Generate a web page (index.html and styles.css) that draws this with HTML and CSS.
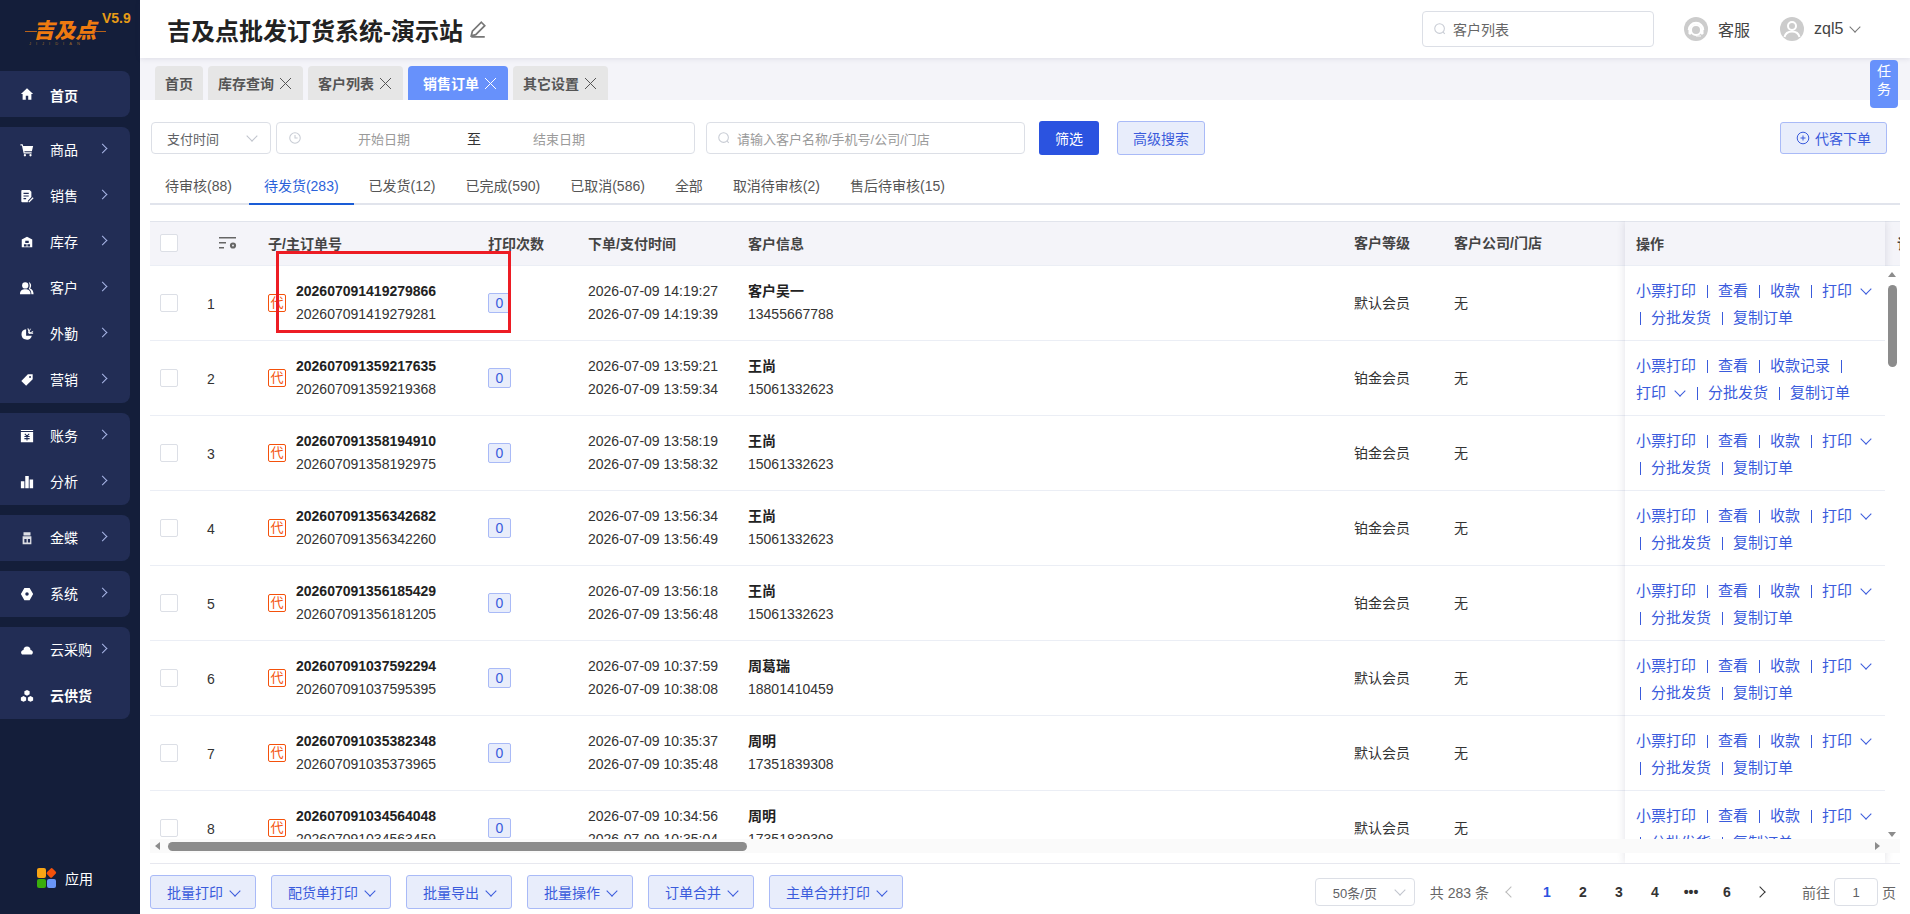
FILE: index.html
```html
<!DOCTYPE html>
<html lang="zh-CN">
<head>
    <meta charset="UTF-8">
    <title>吉及点批发订货系统</title>
    <link rel="stylesheet" href="styles.css">
</head>
<body>
    <aside class="sidebar">
        <div class="logo">
            <span class="logo-text">吉及点</span>
            <span class="logo-sub">JIJIDIAN</span>
            <span class="logo-version">V5.9</span>
        </div>
        <nav class="nav">
            <div class="nav-group">
                <a class="nav-item bold home"><svg class="nav-icon" viewBox="0 0 16 16"><path d="M8 1.500 1 8h2v6.500h3.600V10h2.800v4.500H13V8h2z"/></svg><span>首页</span></a>
            </div>
            <div class="nav-group">
                <a class="nav-item"><svg class="nav-icon" viewBox="0 0 16 16"><path d="M.5 1.500h2.600l.5 2H15l-1.400 6H5l.3 1.200h8v1.200H4.200L2.200 2.800H.5z"/><circle cx="5.600" cy="14" r="1.300"/><circle cx="12" cy="14" r="1.300"/></svg><span>商品</span><i class="chev"></i></a>
                <a class="nav-item"><svg class="nav-icon" viewBox="0 0 16 16"><path d="M2.500 1H11l2 2v6l-4 4.500V15H2.500a1 1 0 0 1-1-1V2a1 1 0 0 1 1-1z"/><path d="M4 5h6M4 8h6M4 11h3" stroke="#222d55" stroke-width="1.300"/><path d="m10 15 5-5" stroke="#fff" stroke-width="1.500"/></svg><span>销售</span><i class="chev"></i></a>
                <a class="nav-item"><svg class="nav-icon" viewBox="0 0 16 16"><path d="M8 2 14 5v9H2V5z"/><path d="M6 6.500h4V9H6zM4.500 10.500h3V13h-3zM8.500 10.500h3V13h-3z" fill="#222d55"/></svg><span>库存</span><i class="chev"></i></a>
                <a class="nav-item"><svg class="nav-icon" viewBox="0 0 16 16"><circle cx="6" cy="5" r="3.600"/><path d="M0 15c0-4 2.500-5.500 6-5.500s6 1.500 6 5.500z"/><path d="M10 1.500c3 .5 3.500 5 1.500 7 2.500 1 4 3 4 6.500h-2.500c0-3-1-5-3-6 1.500-2 1.500-5 0-7.500z"/></svg><span>客户</span><i class="chev"></i></a>
                <a class="nav-item"><svg class="nav-icon" viewBox="0 0 16 16"><path d="M7 2.500a6 6 0 1 0 6.500 7.500H7z"/><path d="M9 1.500 11 7H15" fill="none" stroke="#fff" stroke-width="1.200"/><path d="M12 2 9.500 7M15 5l-5 2.500" fill="none" stroke="#fff" stroke-width="1"/></svg><span>外勤</span><i class="chev"></i></a>
                <a class="nav-item"><svg class="nav-icon" viewBox="0 0 16 16"><path d="M9 1.500h5.500V7L7 14.500 1.500 9z"/><circle cx="11.500" cy="4.500" r="1.100" fill="#222d55"/></svg><span>营销</span><i class="chev"></i></a>
            </div>
            <div class="nav-group">
                <a class="nav-item"><svg class="nav-icon" viewBox="0 0 16 16"><path d="M1 1h14v1.200H1zM1 3.500h14V15H1z"/><path d="m5.500 5.500 2.500 2.500 2.500-2.500M5 8.500h6M5 11h6M8 8v5" fill="none" stroke="#222d55" stroke-width="1.200"/></svg><span>账务</span><i class="chev"></i></a>
                <a class="nav-item"><svg class="nav-icon" viewBox="0 0 16 16"><path d="M1 7h4v8H1zM6 1h4v14H6zM11 5h4v10h-4z"/></svg><span>分析</span><i class="chev"></i></a>
            </div>
            <div class="nav-group">
                <a class="nav-item"><svg class="nav-icon" viewBox="0 0 16 16"><path d="M4 1.500h8v3.500H4zM3 6h10v9H3z" opacity=".85"/><path d="M5 9h2.500v4H5zM9 9h2.500v4H9z" fill="#222d55"/></svg><span>金蝶</span><i class="chev"></i></a>
            </div>
            <div class="nav-group">
                <a class="nav-item"><svg class="nav-icon" viewBox="0 0 16 16"><path fill-rule="evenodd" d="M5 1h6l4 7-4 7H5L1 8zM8 6a2 2 0 1 0 0 4 2 2 0 0 0 0-4z"/></svg><span>系统</span><i class="chev"></i></a>
            </div>
            <div class="nav-group">
                <a class="nav-item"><svg class="nav-icon" viewBox="0 0 16 16"><path d="M4 8a4 4 0 0 1 8 0c3 .2 3.500 4 1.500 5h-11C.5 12 1 8.200 4 8z"/></svg><span class="wide">云采购</span><i class="chev"></i></a>
                <a class="nav-item bold"><svg class="nav-icon" viewBox="0 0 16 16"><path d="m8 1 3 1.700v3.300L8 7.700 5 6V2.700zM4 8l3 1.700V13l-3 1.700L1 13V9.700zM12 8l3 1.700V13l-3 1.700L9 13V9.700z"/></svg><span class="wide">云供货</span></a>
            </div>
        </nav>
        <div class="app-link">
            <span class="app-dots"><i class="dot-a"></i><i class="dot-b"></i><i class="dot-c"></i><i class="dot-d"></i></span>
            <span>应用</span>
        </div>
    </aside>

    <div class="main">
        <header class="topbar">
            <h1 class="title">吉及点批发订货系统-演示站</h1>
            <svg class="edit-icon" viewBox="0 0 16 16"><path d="M11 2l3 3-8 8-4 1 1-4zM2 15h12" fill="none" stroke="#777" stroke-width="1.500"/></svg>
            <div class="top-search">
                <svg class="search-icon" viewBox="0 0 16 16"><circle cx="7.500" cy="7.500" r="5.500"/><path d="m11.500 11.500 2 2"/></svg>
                <span>客户列表</span>
            </div>
            <div class="top-user top-service">
                <span class="avatar"><svg viewBox="0 0 24 24"><path d="M5 13a7 7 0 0 1 14 0" fill="none" stroke="#fff" stroke-width="2.500"/><circle cx="12" cy="13" r="5" fill="none" stroke="#fff" stroke-width="2"/><path d="M5 12h2v5H5zM17 12h2v5h-2zM12 19h5" stroke="#fff" fill="#fff"/></svg></span>
                <span>客服</span>
            </div>
            <div class="top-user top-account">
                <span class="avatar"><svg viewBox="0 0 24 24"><circle cx="12" cy="9" r="4" fill="none" stroke="#fff" stroke-width="2"/><path d="M4.500 20c1-4 4-5.500 7.500-5.500s6.500 1.500 7.500 5.500" fill="none" stroke="#fff" stroke-width="2"/></svg></span>
                <span>zql5</span>
                <i class="caret"></i>
            </div>
        </header>

        <div class="tabbar">
            <span class="tab">首页</span>
            <span class="tab">库存查询<b class="close"></b></span>
            <span class="tab">客户列表<b class="close"></b></span>
            <span class="tab active">销售订单<b class="close"></b></span>
            <span class="tab">其它设置<b class="close"></b></span>
            <span class="task-btn">任务</span>
        </div>

        <section class="content">
            <div class="filters">
                <div class="field pay-type"><span>支付时间</span><i class="caret light"></i></div>
                <div class="field date-range">
                    <svg class="search-icon" viewBox="0 0 16 16"><circle cx="8" cy="8" r="6"/><path d="M8 4.500V8h3"/></svg>
                    <span class="ph date-start">开始日期</span>
                    <span class="date-to">至</span>
                    <span class="ph date-end">结束日期</span>
                </div>
                <div class="field order-search">
                    <svg class="search-icon" viewBox="0 0 16 16"><circle cx="7.500" cy="7.500" r="5.500"/><path d="m11.500 11.500 2 2"/></svg>
                    <span class="ph">请输入客户名称/手机号/公司/门店</span>
                </div>
                <button class="btn-primary">筛选</button>
                <button class="btn-light btn-search">高级搜索</button>
                <button class="btn-light btn-order"><svg class="plus-icon" viewBox="0 0 14 14"><circle cx="7" cy="7" r="5.800"/><path d="M7 4.500v5M4.500 7h5"/></svg>代客下单</button>
            </div>

            <div class="status-tabs">
                <span class="status">待审核(88)</span>
                <span class="status active">待发货(283)</span>
                <span class="status">已发货(12)</span>
                <span class="status">已完成(590)</span>
                <span class="status">已取消(586)</span>
                <span class="status">全部</span>
                <span class="status">取消待审核(2)</span>
                <span class="status">售后待审核(15)</span>
            </div>

            <div class="table" id="table">
                <div class="row head">
                    <div class="c-check"><i class="box"></i></div>
                    <div class="c-num"><svg class="col-icon" viewBox="0 0 18 14"><path d="M0 1h17v1.500H0zM0 6h7v1.500H0zM0 11h5v1.500H0z"/><circle cx="14" cy="9.500" r="2" fill="none" stroke="#666" stroke-width="2.200"/></svg></div>
                    <div class="c-order">子/主订单号</div>
                    <div class="c-print">打印次数</div>
                    <div class="c-time">下单/支付时间</div>
                    <div class="c-cust">客户信息</div>
                    <div class="c-level">客户等级</div>
                    <div class="c-shop">客户公司/门店</div>
                    <div class="c-next">订</div>
                </div>
                <div id="rows"></div>

                <div class="fixed-col" id="ops">
                    <div class="op-head">操作</div>
                </div>

                <div class="mark"></div>
                <div class="vbar"><i class="arrow-up"></i><i class="vthumb"></i><i class="arrow-down"></i></div>
                <div class="hbar"><i class="arrow-left"></i><i class="hthumb"></i><i class="arrow-right"></i></div>
            </div>

            <div class="footer">
                <button class="btn-light btn-batch">批量打印<i class="caret blue"></i></button>
                <button class="btn-light btn-batch">配货单打印<i class="caret blue"></i></button>
                <button class="btn-light btn-batch">批量导出<i class="caret blue"></i></button>
                <button class="btn-light btn-batch">批量操作<i class="caret blue"></i></button>
                <button class="btn-light btn-batch">订单合并<i class="caret blue"></i></button>
                <button class="btn-light btn-batch">主单合并打印<i class="caret blue"></i></button>
                <div class="pager">
                    <div class="field page-size"><span>50条/页</span><i class="caret light"></i></div>
                    <span class="total">共 283 条</span>
                    <i class="prev"></i>
                    <span class="pn current">1</span>
                    <span class="pn">2</span>
                    <span class="pn">3</span>
                    <span class="pn">4</span>
                    <span class="pn">•••</span>
                    <span class="pn">6</span>
                    <i class="next"></i>
                    <span class="goto">前往</span>
                    <span class="field page-input">1</span>
                    <span>页</span>
                </div>
            </div>
        </section>
    </div>

    <script>
        var orders = [
            ['202607091419279866', '202607091419279281', '14:19:27', '14:19:39', '客户吴一', '13455667788', '默认会员'],
            ['202607091359217635', '202607091359219368', '13:59:21', '13:59:34', '王尚', '15061332623', '铂金会员'],
            ['202607091358194910', '202607091358192975', '13:58:19', '13:58:32', '王尚', '15061332623', '铂金会员'],
            ['202607091356342682', '202607091356342260', '13:56:34', '13:56:49', '王尚', '15061332623', '铂金会员'],
            ['202607091356185429', '202607091356181205', '13:56:18', '13:56:48', '王尚', '15061332623', '铂金会员'],
            ['202607091037592294', '202607091037595395', '10:37:59', '10:38:08', '周葛瑞', '18801410459', '默认会员'],
            ['202607091035382348', '202607091035373965', '10:35:37', '10:35:48', '周明', '17351839308', '默认会员'],
            ['202607091034564048', '202607091034563459', '10:34:56', '10:35:04', '周明', '17351839308', '默认会员']
        ];

        var rowsHtml = '';
        var opsHtml = '';
        orders.forEach(function(o, i) {
            rowsHtml += '<div class="row">' +
                '<div class="c-check"><i class="box"></i></div>' +
                '<div class="c-num">' + (i + 1) + '</div>' +
                '<div class="c-order"><span class="dai">代</span><div class="two"><b>' + o[0] + '</b><span>' + o[1] + '</span></div></div>' +
                '<div class="c-print"><span class="count">0</span></div>' +
                '<div class="c-time two"><span>2026-07-09 ' + o[2] + '</span><span>2026-07-09 ' + o[3] + '</span></div>' +
                '<div class="c-cust two"><b>' + o[4] + '</b><span>' + o[5] + '</span></div>' +
                '<div class="c-level">' + o[6] + '</div>' +
                '<div class="c-shop">无</div>' +
                '</div>';

            // the second order has a longer first line, so its links wrap differently
            var lines = i === 1
                ? '<p>小票打印<s></s>查看<s></s>收款记录<s></s></p><p>打印<i class="caret blue"></i><s></s>分批发货<s></s>复制订单</p>'
                : '<p>小票打印<s></s>查看<s></s>收款<s></s>打印<i class="caret blue"></i></p><p><s class="first"></s>分批发货<s></s>复制订单</p>';
            opsHtml += '<div class="op-cell">' + lines + '</div>';
        });
        document.getElementById('rows').innerHTML = rowsHtml;
        document.getElementById('ops').insertAdjacentHTML('beforeend', opsHtml);
    </script>
</body>
</html>
```

FILE: styles.css
```css
* {
    box-sizing: border-box;
}

html, body {
    height: 100%;
}

body {
    margin: 0;
    display: flex;
    height: 914px;
    overflow: hidden;
    font-family: "Liberation Sans", "Noto Sans CJK SC", sans-serif;
    font-size: 14px;
    color: #333;
    background: #fff;
}

i, s {
    font-style: normal;
    text-decoration: none;
}

button {
    font-family: inherit;
    cursor: pointer;
}

/* sidebar */
.sidebar {
    width: 140px;
    flex: none;
    display: flex;
    flex-direction: column;
    background: #141e3a;
    color: #fff;
}

.logo {
    height: 71px;
    position: relative;
}

/* the two little dashes either side of the logo */
.logo::before, .logo::after {
    content: "";
    position: absolute;
    top: 31px;
    width: 12px;
    height: 1px;
    background: #b8621a;
}

.logo::before {
    left: 25px;
}

.logo::after {
    left: 94px;
}

.logo-text {
    position: absolute;
    left: 35px;
    top: 18px;
    font-size: 21px;
    line-height: 26px;
    font-weight: 900;
    color: #ee7a10;
    transform: skewX(-14deg);
}

.logo-sub {
    position: absolute;
    left: 29px;
    top: 41px;
    font-size: 4px;
    line-height: 5px;
    letter-spacing: 5px;
    color: #9c6a2a;
    white-space: nowrap;
}

.logo-version {
    position: absolute;
    left: 102px;
    top: 10px;
    font-size: 14px;
    line-height: 16px;
    font-weight: bold;
    color: #e79b16;
}

.nav-group {
    width: 130px;
    margin-bottom: 10px;
    background: #222d55;
    border-radius: 0 8px 8px 0;
}

.nav-item {
    height: 46px;
    display: flex;
    align-items: center;
    padding-left: 20px;
    font-size: 14px;
}

.nav-item.bold {
    font-weight: bold;
}

.nav-icon {
    width: 14px;
    height: 14px;
    margin-right: 16px;
    fill: #fff;
    flex: none;
}

.nav-item span {
    width: 42px;
    padding-bottom: 2px;
}

.nav-item.home span {
    padding-bottom: 0;
    padding-top: 2px;
}

.nav-item span.wide {
    white-space: nowrap;
}

.chev {
    width: 7px;
    height: 7px;
    margin-left: 7px;
    margin-top: -4px;
    border-top: 1.5px solid #a9b6e8;
    border-right: 1.5px solid #a9b6e8;
    transform: rotate(45deg);
}

.app-link {
    margin-top: auto;
    height: 46px;
    margin-bottom: 13px;
    display: flex;
    align-items: center;
    padding-left: 37px;
    gap: 8px;
    font-size: 14px;
}

.app-dots {
    width: 20px;
    height: 20px;
    display: grid;
    grid-template-columns: 9px 9px;
    gap: 1px;
}

.app-dots i {
    border-radius: 2px;
}

.dot-a { background: #f9a515; }
.dot-b { background: #f4510b; transform: rotate(45deg) scale(.8); }
.dot-c { background: #3aae0c; }
.dot-d { background: #6a96f8; }

/* top bar */
.main {
    flex: 1;
    min-width: 0;
    display: flex;
    flex-direction: column;
}

.topbar {
    height: 58px;
    flex: none;
    display: flex;
    align-items: center;
    padding-left: 27px;
    background: #fff;
    box-shadow: 0 1px 5px rgba(40, 40, 80, .10);
    position: relative;
    z-index: 2;
}

.title {
    margin: 0;
    font-size: 24px;
    font-weight: bold;
    color: #222;
}

.edit-icon {
    width: 18px;
    height: 18px;
    margin-left: 6px;
}

.top-search {
    margin-left: auto;
    width: 232px;
    height: 36px;
    display: flex;
    align-items: center;
    padding-left: 10px;
    border: 1px solid #dcdfe6;
    border-radius: 4px;
    font-size: 14px;
    color: #666;
}

.search-icon {
    width: 14px;
    height: 14px;
    margin-right: 6px;
    fill: none;
    stroke: #c8ccd4;
    stroke-width: 1.2;
    flex: none;
}

.top-user {
    display: flex;
    align-items: center;
    font-size: 16px;
    color: #444;
}

.top-service {
    margin-left: 30px;
    margin-right: 30px;
}

.top-account {
    width: 130px;
}

.avatar {
    width: 24px;
    height: 24px;
    margin-right: 10px;
    border-radius: 50%;
    background: #cccccc;
    display: flex;
}

.caret {
    display: inline-block;
    width: 8px;
    height: 8px;
    margin-left: 8px;
    margin-top: -4px;
    border-right: 1px solid #777;
    border-bottom: 1px solid #777;
    transform: rotate(45deg);
}

.caret.light {
    margin-left: auto;
    border-color: #c0c4cc;
}

.caret.blue {
    vertical-align: 3px;
    margin-top: 0;
    border-color: #3a5bdc;
}

/* page tabs */
.tabbar {
    height: 42px;
    flex: none;
    display: flex;
    align-items: flex-end;
    gap: 5px;
    padding-left: 15px;
    background: #f4f4f9;
    position: relative;
}

.tab {
    height: 34px;
    display: flex;
    align-items: center;
    padding: 0 10px;
    border-radius: 4px 4px 0 0;
    background: #e6e6e6;
    font-size: 14px;
    font-weight: bold;
    color: #555;
}

.tab.active {
    padding: 0 11px 0 15px;
    background: #6791fb;
    color: #fff;
}

.close {
    width: 11px;
    height: 11px;
    margin-left: 6px;
    margin-right: 2px;
    background:
        linear-gradient(45deg, transparent 46%, currentColor 46%, currentColor 54%, transparent 54%),
        linear-gradient(-45deg, transparent 46%, currentColor 46%, currentColor 54%, transparent 54%);
}

.tab.active .close {
    margin-right: 1px;
}

.task-btn {
    position: absolute;
    right: 12px;
    top: 2px;
    width: 28px;
    height: 48px;
    padding: 2px 7px;
    border-radius: 4px;
    background: #6791fb;
    color: #fff;
    font-size: 14px;
    line-height: 18px;
    text-align: center;
    z-index: 3;
}

/* filters */
.content {
    flex: 1;
    min-height: 0;
    display: flex;
    flex-direction: column;
    padding: 21px 10px 0;
}

.filters {
    display: flex;
    align-items: center;
    height: 34px;
    padding-left: 1px;
}

.field {
    display: flex;
    align-items: center;
    height: 32px;
    border: 1px solid #dcdfe6;
    border-radius: 4px;
    font-size: 13px;
    color: #606266;
    background: #fff;
}

.ph {
    color: #9a9a9a;
}

.pay-type {
    width: 120px;
    padding: 0 14px 0 15px;
}

.date-range {
    width: 419px;
    margin-left: 5px;
    padding-left: 11px;
}

.date-start {
    margin-left: 50px;
}

.date-to {
    margin-left: 57px;
    color: #333;
    font-size: 14px;
}

.date-end {
    margin-left: 52px;
}

.order-search {
    width: 319px;
    margin-left: 11px;
    padding-left: 10px;
}

.btn-primary {
    width: 60px;
    height: 34px;
    margin-left: 14px;
    border: none;
    border-radius: 3px;
    background: #2b53e0;
    color: #fff;
    font-size: 14px;
}

.btn-light {
    height: 34px;
    border: 1px solid #a9baf7;
    border-radius: 3px;
    background: #e8edfb;
    color: #3a5bdc;
    font-size: 14px;
}

.btn-search {
    width: 88px;
    margin-left: 18px;
}

.btn-order {
    width: 107px;
    height: 32px;
    margin-left: auto;
    margin-right: 13px;
    display: flex;
    align-items: center;
    justify-content: center;
}

.plus-icon {
    width: 14px;
    height: 14px;
    margin-right: 5px;
    fill: none;
    stroke: #3a5bdc;
    stroke-width: 1;
}

/* status tabs */
.status-tabs {
    display: flex;
    margin-top: 16px;
    height: 34px;
    border-bottom: 2px solid #e1e4ec;
}

.status {
    height: 34px;
    padding: 0 15px;
    line-height: 30px;
    font-size: 14px;
    color: #555;
}

.status.active {
    margin-left: 2px;
    color: #2b62d9;
    border-bottom: 2px solid #1a5cd6;
}

/* table */
.table {
    margin-top: 16px;
    height: 643px;
    position: relative;
    overflow: hidden;
    border-bottom: 1px solid #e7e8ef;
}

.row {
    display: flex;
    align-items: center;
    height: 75px;
    border-bottom: 1px solid #ebeef5;
    font-size: 14px;
}

.row.head {
    height: 45px;
    padding-bottom: 2px;
    border-top: 1px solid #e1e4ec;
    background: #f4f4f9;
    color: #444;
    font-weight: bold;
}

.box {
    display: block;
    width: 18px;
    height: 18px;
    border: 1px solid #dcdfe6;
    border-radius: 2px;
    background: #fff;
}

.c-check {
    width: 57px;
    padding-left: 10px;
    flex: none;
}

.c-num {
    width: 61px;
    padding-top: 1px;
    flex: none;
}

.col-icon {
    display: block;
    margin-left: 12px;
    width: 18px;
    height: 14px;
    fill: #666;
}

.c-order {
    width: 220px;
    flex: none;
    display: flex;
    align-items: center;
}

.dai {
    width: 18px;
    height: 18px;
    margin-right: 10px;
    border: 1px solid #f4510b;
    border-radius: 2px;
    color: #f4510b;
    font-size: 13px;
    line-height: 16px;
    text-align: center;
}

.two {
    display: flex;
    flex-direction: column;
    gap: 6px;
    line-height: 17px;
}

.two b {
    color: #222;
}

.c-print {
    width: 100px;
    flex: none;
}

.count {
    display: block;
    width: 23px;
    height: 20px;
    border: 1px solid #a9baf7;
    border-radius: 2px;
    background: #e8edfb;
    color: #3a5bdc;
    font-size: 14px;
    line-height: 18px;
    text-align: center;
}

.c-time {
    width: 160px;
    flex: none;
}

.c-cust {
    width: 606px;
    flex: none;
}

.c-level {
    width: 100px;
    padding-bottom: 2px;
    flex: none;
}

.c-shop {
    width: 443px;
    padding-bottom: 2px;
    flex: none;
}

.c-next {
    flex: none;
    white-space: nowrap;
}

/* fixed operation column */
.fixed-col {
    position: absolute;
    right: 15px;
    top: 0;
    width: 260px;
    height: 100%;
    background: #fff;
    box-shadow: 0 0 8px rgba(40, 40, 80, .14);
}

.op-head {
    height: 45px;
    padding-left: 11px;
    line-height: 44px;
    border-top: 1px solid #e1e4ec;
    border-bottom: 1px solid #ebeef5;
    background: #f4f4f9;
    font-size: 14px;
    font-weight: bold;
    color: #444;
}

.op-cell {
    height: 75px;
    padding: 11px 11px 0;
    border-bottom: 1px solid #ebeef5;
    color: #3a5bdc;
    font-size: 15px;
    line-height: 27px;
    white-space: nowrap;
}

.op-cell p {
    margin: 0;
}

.op-cell s {
    display: inline-block;
    width: 1px;
    height: 13px;
    margin: 0 10px 0 11px;
    vertical-align: -2px;
    background: #3a5bdc;
}

.op-cell s.first {
    margin-left: 4px;
}

.op-cell .caret {
    margin-left: 10px;
    margin-right: 2px;
}

.mark {
    position: absolute;
    left: 126px;
    top: 30px;
    width: 235px;
    height: 82px;
    border: 3px solid #ed1c24;
    pointer-events: none;
}

/* scrollbars */
.vbar {
    position: absolute;
    right: 0;
    top: 45px;
    bottom: 23px;
    width: 15px;
    background: #fff;
}

.vbar i, .hbar i {
    display: block;
    position: absolute;
}

.vthumb {
    left: 3px;
    top: 19px;
    width: 9px;
    height: 82px;
    border-radius: 5px;
    background: #8c8c8c;
}

.arrow-up {
    left: 3px;
    top: 6px;
    border: 4.5px solid transparent;
    border-top: 0;
    border-bottom: 5px solid #8c8c8c;
}

.arrow-down {
    left: 3px;
    bottom: 3px;
    border: 4.5px solid transparent;
    border-bottom: 0;
    border-top: 5px solid #8c8c8c;
}

.hbar {
    position: absolute;
    left: 0;
    right: 0;
    bottom: 10px;
    height: 14px;
    background: #fafafa;
}

.hthumb {
    left: 18px;
    top: 3px;
    width: 579px;
    height: 9px;
    border-radius: 5px;
    background: #8c8c8c;
}

.arrow-left {
    left: 5px;
    top: 3px;
    border: 4.5px solid transparent;
    border-left: 0;
    border-right: 5px solid #8c8c8c;
}

.arrow-right {
    right: 20px;
    top: 3px;
    border: 4.5px solid transparent;
    border-right: 0;
    border-left: 5px solid #8c8c8c;
}

/* bottom bar */
.footer {
    display: flex;
    align-items: flex-start;
    height: 50px;
    padding-top: 11px;
}

.btn-batch {
    padding: 0 16px;
    margin-right: 15px;
    white-space: nowrap;
}

.pager {
    margin-left: auto;
    margin-right: 4px;
    display: flex;
    align-items: center;
    height: 34px;
    font-size: 14px;
    color: #666;
}

.page-size {
    width: 100px;
    height: 28px;
    padding: 0 10px 0 17px;
}

.total {
    margin: 0 10px 0 15px;
}

.prev, .next {
    width: 8px;
    height: 8px;
    margin: 0 14px 0 8px;
    border-left: 1.5px solid #bbb;
    border-bottom: 1.5px solid #bbb;
    transform: rotate(45deg);
}

.next {
    margin: 0 38px 0 11px;
    border-color: #333;
    transform: rotate(225deg);
}

.pn {
    width: 36px;
    text-align: center;
    font-weight: bold;
    color: #333;
}

.pn.current {
    color: #2b53e0;
}

.goto {
    margin-right: 4px;
}

.page-input {
    width: 44px;
    height: 28px;
    margin-right: 4px;
    justify-content: center;
}
```
